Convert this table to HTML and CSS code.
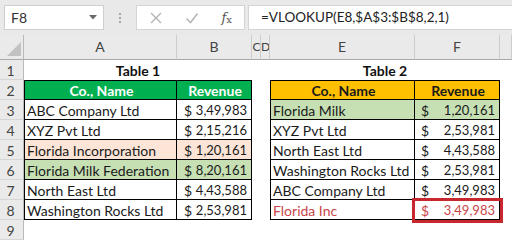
FILE: index.html
```html
<!DOCTYPE html>
<html>
<head>
<meta charset="utf-8">
<link rel="stylesheet" href="styles.css">
</head>
<body>
<div class="app">
  <div class="toolbar">
    <div class="namebox"><span>F8</span>
      <svg class="dd" width="8" height="5" viewBox="0 0 8 5"><path d="M0 0H8L4 4.5Z" fill="#6a6a6a"/></svg>
    </div>
    <div class="grip"><i></i><i></i><i></i></div>
    <div class="btns">
      <svg width="14" height="14" viewBox="0 0 14 14"><path d="M2 2L12 12M12 2L2 12" stroke="#b4b4b4" stroke-width="1.4"/></svg>
      <svg width="14" height="14" viewBox="0 0 14 14"><path d="M1.5 7.5L5.5 11.5L12.5 2.5" stroke="#b4b4b4" stroke-width="1.5" fill="none"/></svg>
      <span class="fx"><i>f</i><sub>x</sub></span>
    </div>
    <div class="formula">=VLOOKUP(E8,$A$3:$B$8,2,1)</div>
  </div>
  <div class="sheet">
    <div class="ch corner"><svg width="14" height="14" viewBox="0 0 14 14"><path d="M14 0V14H0Z" fill="#c2c2c2"/></svg></div>
    <div class="ch">A</div><div class="ch">B</div><div class="ch narrow">C</div><div class="ch narrow">D</div><div class="ch">E</div><div class="ch">F</div><div class="ch"></div>

    <div class="rh">1</div>
    <div class="title t1">Table 1</div>
    <div class="blank"></div><div class="blank"></div>
    <div class="title t2">Table 2</div>
    <div class="blank"></div>

    <div class="rh">2</div>
    <div class="c l top hg">Co., Name</div><div class="c top hg">Revenue</div>
    <div class="blank"></div><div class="blank"></div>
    <div class="c l top ho">Co., Name</div><div class="c top ho">Revenue</div>
    <div class="blank"></div>

    <div class="rh">3</div>
    <div class="c l">ABC Company Ltd</div><div class="c acc a1"><span>$</span><span>3,49,983</span></div>
    <div class="blank"></div><div class="blank"></div>
    <div class="c l lg">Florida Milk</div><div class="c acc a2 lg"><span>$</span><span>1,20,161</span></div>
    <div class="blank"></div>

    <div class="rh">4</div>
    <div class="c l">XYZ Pvt Ltd</div><div class="c acc a1"><span>$</span><span>2,15,216</span></div>
    <div class="blank"></div><div class="blank"></div>
    <div class="c l">XYZ Pvt Ltd</div><div class="c acc a2"><span>$</span><span>2,53,981</span></div>
    <div class="blank"></div>

    <div class="rh">5</div>
    <div class="c l pe">Florida Incorporation</div><div class="c acc a1 pe"><span>$</span><span>1,20,161</span></div>
    <div class="blank"></div><div class="blank"></div>
    <div class="c l">North East Ltd</div><div class="c acc a2"><span>$</span><span>4,43,588</span></div>
    <div class="blank"></div>

    <div class="rh">6</div>
    <div class="c l lg">Florida Milk Federation</div><div class="c acc a1 lg"><span>$</span><span>8,20,161</span></div>
    <div class="blank"></div><div class="blank"></div>
    <div class="c l">Washington Rocks Ltd</div><div class="c acc a2"><span>$</span><span>2,53,981</span></div>
    <div class="blank"></div>

    <div class="rh">7</div>
    <div class="c l">North East Ltd</div><div class="c acc a1"><span>$</span><span>4,43,588</span></div>
    <div class="blank"></div><div class="blank"></div>
    <div class="c l">ABC Company Ltd</div><div class="c acc a2"><span>$</span><span>3,49,983</span></div>
    <div class="blank"></div>

    <div class="rh">8</div>
    <div class="c l">Washington Rocks Ltd</div><div class="c acc a1"><span>$</span><span>2,53,981</span></div>
    <div class="blank"></div><div class="blank"></div>
    <div class="c l red">Florida Inc</div><div class="c acc a2 red sel"><span>$</span><span>3,49,983</span></div>
    <div class="blank"></div>

    <div class="rh">9</div>
    <div class="blank"></div><div class="blank"></div><div class="blank"></div><div class="blank"></div><div class="blank"></div><div class="blank"></div><div class="blank"></div>
  </div>
</div>
</body>
</html>
```
FILE: styles.css
```css
* { box-sizing: border-box; }
html, body { margin: 0; padding: 0; }
body {
  width: 512px;
  height: 241px;
  overflow: hidden;
  background: #fff;
  font-family: Lato, "Open Sans", sans-serif;
  color: #1a1a1a;
}
.app { display: flex; flex-direction: column; }

.toolbar {
  height: 35px;
  background: #e9e9e9;
  display: flex;
  align-items: flex-start;
  padding: 5px 0 0 4px;
}
.namebox {
  width: 100px;
  height: 25px;
  background: #fff;
  border: 1px solid #cfcfcf;
  display: flex;
  align-items: center;
  justify-content: space-between;
  padding: 0 6px 0 6px;
  font-size: 14px;
  color: #333;
}
.grip {
  width: 32px;
  height: 25px;
  display: flex;
  flex-direction: column;
  align-items: center;
  justify-content: center;
  gap: 2px;
}
.grip i { width: 2px; height: 2px; background: #a8a8a8; display: block; }
.btns {
  width: 109px;
  height: 25px;
  background: #fff;
  border: 1px solid #d4d4d4;
  display: flex;
  align-items: center;
  justify-content: space-between;
  padding: 0 12px 0 12px;
}
.fx {
  font-family: "DejaVu Serif", "Liberation Serif", serif;
  color: #555;
  font-size: 13px;
}
.fx sub { font-size: 10px; vertical-align: -1px; }
.formula {
  margin-left: 3px;
  flex: 1;
  height: 25px;
  background: #fff;
  border: 1px solid #d4d4d4;
  border-right: none;
  padding-left: 12px;
  font-size: 13.5px;
  line-height: 23px;
  color: #222;
}

.sheet {
  display: grid;
  grid-template-columns: 24px 153px 75px 9px 9px 145px 85px 1fr;
  grid-template-rows: 25px repeat(9, 20px);
  font-size: 14px;
}
.ch {
  background: #eaeaea;
  border-right: 1px solid #cdcdcd;
  border-bottom: 1px solid #a9a9a9;
  text-align: center;
  line-height: 24px;
  font-size: 14px;
  color: #444;
  overflow: hidden;
}
.ch.narrow { font-size: 12px; letter-spacing: -1px; }
.corner {
  display: flex;
  align-items: flex-end;
  justify-content: flex-end;
  padding: 0 2px 3px 0;
  border-right: 1px solid #b9b9b9;
}
.rh {
  background: #eaeaea;
  border-right: 1px solid #b9b9b9;
  border-bottom: 1px solid #d6d6d6;
  text-align: center;
  line-height: 21px;
  color: #444;
  font-size: 14px;
  padding-right: 2px;
}
.blank { background: #fff; }
.title {
  font-weight: bold;
  text-align: center;
  line-height: 21px;
  color: #111;
}
.t1 { grid-column: 2 / 4; }
.t2 { grid-column: 6 / 8; }

.c {
  border-right: 1px solid #000;
  border-bottom: 1px solid #000;
  line-height: 21px;
  padding-left: 2px;
  white-space: nowrap;
  overflow: hidden;
}
.c.l { border-left: 1px solid #000; }
.c.top { border-top: 1px solid #000; line-height: 19px; }
.hg { background: #00b050; color: #fff; font-weight: bold; text-align: center; }
.ho { background: #ffc000; color: #1a1a1a; font-weight: bold; text-align: center; }
.lg { background: #c6e0b4; }
.pe { background: #fce4d6; }
.red { color: #c8464a; }
.acc { display: flex; justify-content: space-between; padding-right: 4px; font-size: 13px; }
.acc span:first-child { font-size: 14px; }
.a1 { padding-left: 7px; }
.a2 { padding-left: 6px; }
.sel { position: relative; overflow: visible; }
.sel::after {
  content: "";
  position: absolute;
  left: -3px;
  top: -2px;
  right: -4px;
  bottom: -4px;
  border: 3px solid #c6282e;
}
```
